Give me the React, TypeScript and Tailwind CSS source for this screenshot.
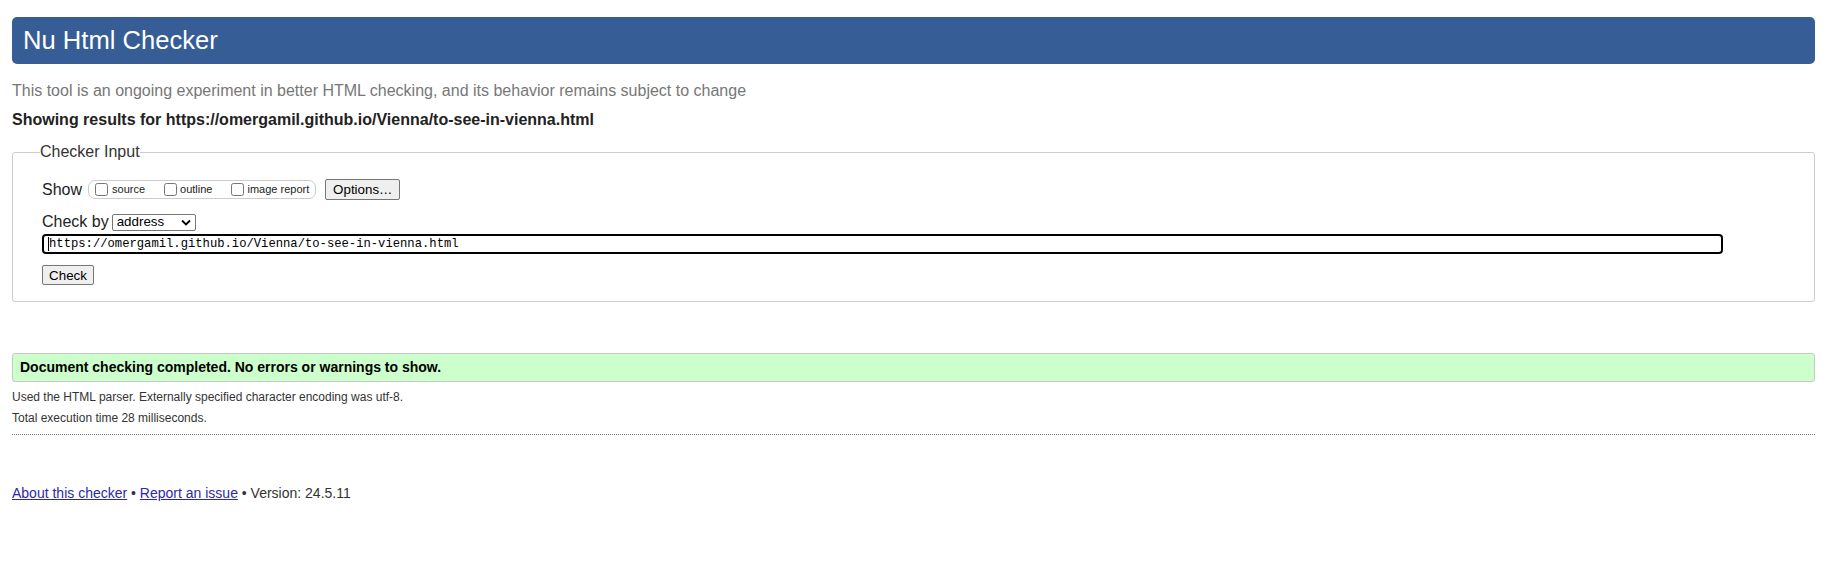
import React from "react";

export default function App() {
  const url = "https://omergamil.github.io/Vienna/to-see-in-vienna.html";

  return (
    <div className="min-h-screen bg-white pl-3 pr-[15px] pb-10 font-['Liberation_Sans',Arial,sans-serif] text-[#222]">
      <header className="mt-[17px] flex h-[47px] items-center rounded-[5px] bg-[#365d95] px-[11px] text-[25.6px] text-white">
        Nu Html Checker
      </header>

      <p className="mt-[18px] text-[16px] leading-[18px] text-[#777]">
        This tool is an ongoing experiment in better HTML checking, and its behavior remains subject to change
      </p>
      <p className="mt-[11px] text-[16px] font-bold leading-[18px] text-[#222]">
        Showing results for {url}
      </p>

      <fieldset className="mt-[14px] rounded-[3px] border border-[#ccc] pb-[16px] pl-[29px] pr-[28px]">
        <legend className="-ml-[2px] text-[16px] leading-[18px] text-[#333]">Checker Input</legend>

        <div className="mt-[18px] flex h-[21px] items-center">
          <span className="text-[16px] leading-[18px] text-[#222]">Show</span>
          <div className="ml-[6px] flex h-[19px] items-center rounded-[7px] border border-[#ccc] pl-[6px] pr-[6px] text-[11px] text-[#222]">
            <input type="checkbox" className="h-[13px] w-[13px]" readOnly />
            <span className="ml-[4px] mr-[19px]">source</span>
            <input type="checkbox" className="h-[13px] w-[13px]" readOnly />
            <span className="ml-[3px] mr-[19px]">outline</span>
            <input type="checkbox" className="h-[13px] w-[13px]" readOnly />
            <span className="ml-[3px]">image report</span>
          </div>
          <button className="ml-[9px] h-[21px] w-[75px] rounded-[2px] border border-[#767676] bg-[#efefef] text-[13.33px] text-black">
            Options…
          </button>
        </div>

        <div className="mt-[12px] flex h-[20px] items-center">
          <span className="text-[16px] leading-[18px] text-[#222]">Check by</span>
          <div className="ml-[3px] flex h-[17px] w-[84px] items-center justify-between rounded-[2px] border border-[#767676] bg-white pl-[4px] pr-[4px] text-[13.33px] text-black">
            <span>address</span>
            <svg width="10" height="7" viewBox="0 0 10 7" fill="none">
              <path d="M1 1.5L5 5.5L9 1.5" stroke="#000" strokeWidth="1.8" />
            </svg>
          </div>
        </div>

        <div className="mt-[2px] flex h-[20px] w-[1681px] items-center rounded-[4px] border-2 border-black pl-[4px] font-['Liberation_Mono','Courier_New',monospace] text-[12.2px] text-black">
          <span className="h-[14px] w-px bg-black" />
          <span>{url}</span>
        </div>

        <button className="mt-[11px] block h-[20px] w-[52px] rounded-[2px] border border-[#767676] bg-[#efefef] text-[13.33px] text-black">
          Check
        </button>
      </fieldset>

      <div className="mt-[51px] flex h-[29px] items-center rounded-[3px] border border-[#c4cbc4] bg-[#ccffcc] px-[7px] text-[14px] font-bold text-black">
        Document checking completed. No errors or warnings to show.
      </div>

      <p className="mt-[5px] text-[12px] leading-[21px] text-[#333]">
        Used the HTML parser. Externally specified character encoding was utf-8.
      </p>
      <p className="text-[12px] leading-[21px] text-[#333]">Total execution time 28 milliseconds.</p>

      <div className="mt-[5px] border-t border-dotted border-[#777]" />

      <div className="mt-[50px] text-[14px] leading-[16px] text-[#333]">
        <a href="#" className="text-[#2a2aa8] underline">
          About this checker
        </a>{" "}
        •{" "}
        <a href="#" className="text-[#2a2aa8] underline">
          Report an issue
        </a>{" "}
        • Version: 24.5.11
      </div>
    </div>
  );
}
